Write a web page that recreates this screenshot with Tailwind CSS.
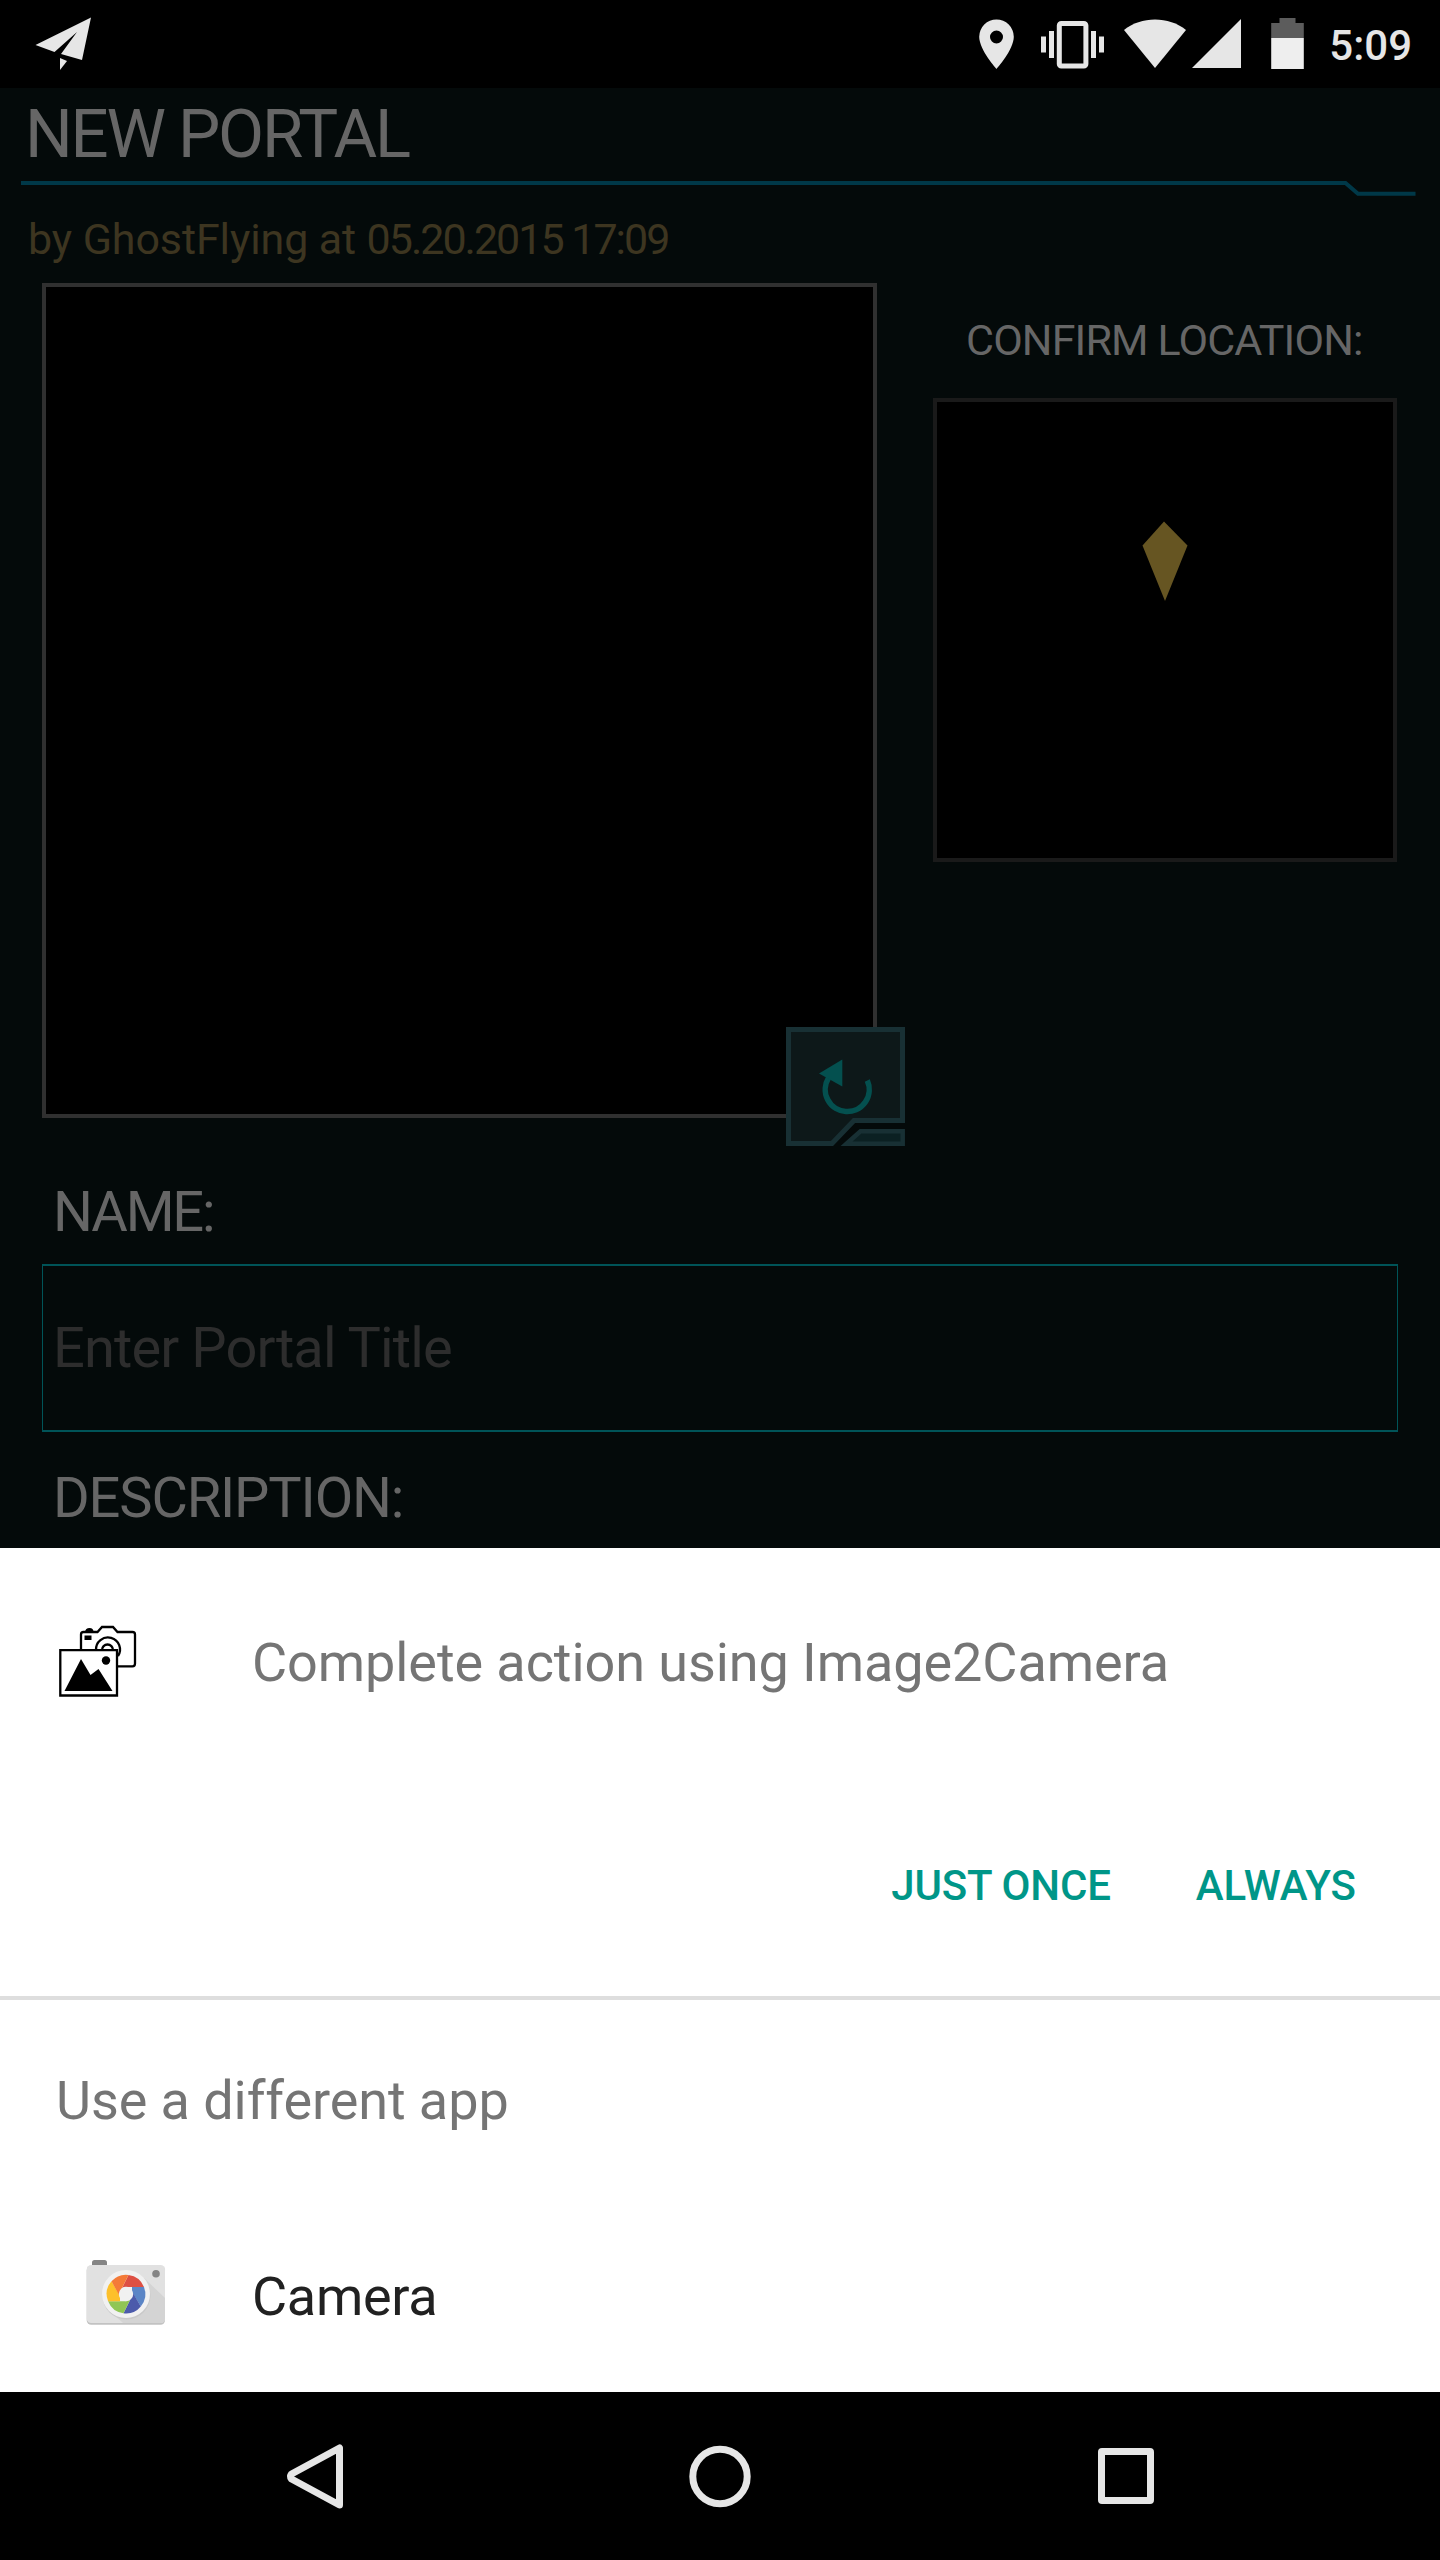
<!DOCTYPE html>
<html lang="en">
<head>
<meta charset="utf-8">
<title>New Portal</title>
<script src="https://cdn.jsdelivr.net/npm/@tailwindcss/browser@4"></script>
</head>
<body class="bg-black">
<div class="flex h-[2560px] w-[1440px] flex-col overflow-hidden bg-[#040a0a] font-['Roboto',sans-serif] whitespace-nowrap">

  <!-- Status bar -->
  <header class="flex h-[88px] shrink-0 justify-between bg-black">
    <svg class="h-[88px] w-[100px]" viewBox="0 0 100 88" fill="#e6e6e6">
      <path d="M91 17.5 35.5 45 54.5 52 77 32 61 54 82 60Z"/>
      <path d="M60 58 67 61 60 70Z"/>
    </svg>
    <div class="flex">
      <svg class="h-[88px] w-[371px]" viewBox="960 0 371 88" fill="#e6e6e6">
        <path fill-rule="evenodd" d="M996.500 19.500a17.300 17.300 0 0 0-17.300 17.300c0 13 17.300 32.200 17.300 32.200s17.300-19.200 17.300-32.200a17.300 17.300 0 0 0-17.300-17.300Zm0 11a6.500 6.500 0 1 1 0 13a6.500 6.500 0 0 1 0-13Z"/>
        <path d="M1041 36.500h5V52.500h-5zM1049 31h5V58h-5zM1091 31h5V58h-5zM1099 36.500h5V52.500h-5z"/>
        <rect x="1059.300" y="23.500" width="26.600" height="42.500" rx="2" fill="none" stroke="#e6e6e6" stroke-width="5"/>
        <path d="M1124 30C1141 16 1169 16 1186 30L1155 68Z"/>
        <path d="M1192 68 1241 19V68Z"/>
        <path fill="#5c5c5c" d="M1279.500 18h16v5h8.300v15h-32.600V23h8.300Z"/>
        <path fill="#eee" d="M1271.200 38h32.600v31h-32.600z"/>
      </svg>
      <span class="mr-[28px] ml-[-2px] h-[88px] text-[42px] leading-[91px] font-medium text-[#e6e6e6]">5:09</span>
    </div>
  </header>

  <!-- Portal submission form -->
  <main class="flex h-[1460px] shrink-0 flex-col overflow-hidden text-[#666]">
    <h1 class="h-[92px] pl-[25px] text-[67px] leading-[92px] tracking-[-2.23px]">NEW PORTAL</h1>
    <svg class="h-[18px] w-[1440px]" viewBox="0 180 1440 18" fill="none" stroke="#003848" stroke-width="4">
      <path d="M21 183H1345.500L1358 193.700H1415.500"/>
    </svg>
    <p class="h-[85px] pl-[28px] text-[43px] leading-[83px] tracking-[-0.1px] text-[#3d3520]">by GhostFlying at <span class="tracking-[-2px]">05.20.2015 17:09</span></p>

    <div class="flex gap-[56px] pl-[42px]">
      <div class="relative size-[835px] border-4 border-[#303030] bg-black">
        <svg class="absolute top-[740px] left-[740px] size-[119px]" viewBox="0 0 119 119">
          <path fill="#040a0a" d="M0 0H119V119H0Z"/>
          <path fill="#0d1819" stroke="#183034" stroke-width="5" d="M2.500 2.500H116.500V93.500H68L46 116.500H2.500Z"/>
          <path fill="#0b2022" stroke="#183034" stroke-width="4.500" d="M60.500 116.700 74.500 104.300H116.700V116.700Z"/>
          <path fill="none" stroke="#04504f" stroke-width="5.500" d="M42.500 51A22 22 0 1 0 81.300 53.500"/>
          <path fill="#04504f" d="M33 46.500 56.300 32.500V59.500Z"/>
        </svg>
      </div>
      <div class="flex w-[464px] flex-col">
        <h2 class="h-[115px] pl-[33px] text-[43px] leading-[115px] tracking-[-0.86px]">CONFIRM LOCATION:</h2>
        <div class="size-[464px] border-4 border-[#1a1a1a] bg-black">
          <svg class="size-[456px]" viewBox="937 402 456 456"><path fill="#665522" d="M1164 521.500 1187.500 545.500 1165 601 1142.500 545.500Z"/></svg>
        </div>
      </div>
    </div>

    <label class="mt-[52px] h-[94px] pl-[53px] text-[56px] leading-[84px] tracking-[-2.17px]">NAME:</label>
    <div class="mx-[42px] h-[168px] shrink-0 border-x border-y-2 border-[#005458] pl-[10px] text-[56px] leading-[164px] tracking-[-0.89px] text-[#2d2d2d]">Enter Portal Title</div>
    <label class="mt-[24px] h-[84px] pl-[53px] text-[56px] leading-[84px] tracking-[-1.15px]">DESCRIPTION:</label>
  </main>

  <!-- App chooser sheet -->
  <section class="flex h-[844px] shrink-0 flex-col bg-white text-[54px] text-[#757575]">
    <div class="flex h-[228px] items-center">
      <svg class="ml-[56px] h-[76px] w-[84px]" viewBox="56 1624 84 76" fill="none" stroke="#000" stroke-width="2.300">
        <path d="M81 1650V1634.500Q81 1632 83.500 1632H97.500L102 1627H113L117.500 1632H132.500Q135 1632 135 1634.500V1663.500Q135 1666.300 132.500 1666.300H118"/>
        <path d="M96 1650A12 12 0 1 1 118 1656M102 1650A5.500 5.500 0 0 1 113 1650"/>
        <path fill="#000" stroke="none" d="M85 1632Q85.500 1628 89.500 1628T93.500 1632ZM84.500 1635.500h7v4.500h-7z"/>
        <path fill="#fff" d="M60.300 1650.200H117V1695.500H60.300Z"/>
        <path fill="#000" stroke="none" d="M64.500 1691 81 1659 90.500 1675 98.500 1669 112.500 1691Z"/>
        <circle cx="106" cy="1660.500" r="4.200" fill="#000" stroke="none"/>
      </svg>
      <span class="ml-[112px] tracking-[-0.08px]">Complete action using Image2Camera</span>
    </div>
    <div class="flex h-[220px] items-center justify-end gap-[85px] pr-[84px] pb-[2px] text-[42px] font-medium text-[#009688]">
      <span class="tracking-[-0.2px]">JUST ONCE</span>
      <span>ALWAYS</span>
    </div>
    <div class="h-1 bg-[#dedede]"></div>
    <div class="flex h-[200px] items-center pl-[56px] tracking-[-0.08px]">Use a different app</div>
    <div class="flex h-[192px] items-center text-[#212121]">
      <svg class="mb-2 ml-[84px] h-[70px] w-[84px]" viewBox="84 2257 84 70">
        <path fill="#858585" d="M92 2266V2262.500Q92 2260 94.500 2260H104.500Q107 2260 107 2262.500V2266Z"/>
        <rect x="86.700" y="2266" width="78.300" height="58.800" rx="4.500" fill="#c2c2c2"/>
        <rect x="86.700" y="2265" width="78.300" height="58" rx="4.500" fill="#e1e1e1"/>
        <path fill="#d4d4d4" d="M144 2278 165 2298V2318.500Q165 2323 160.500 2323H123L110 2311Z"/>
        <circle cx="156" cy="2273.700" r="3.800" fill="#858585"/>
        <circle cx="126.500" cy="2295.500" r="24" fill="#c9c9c9"/>
        <circle cx="126" cy="2294" r="24" fill="#f1f1f1"/>
        <g transform="translate(126 2294)">
          <path fill="#dd4f43" d="M2.500-19.100A19.300 19.300 0 0 1 18-7H0L-4-6Z"/>
          <path fill="#5b85c6" d="M18-7A19.300 19.300 0 0 1 14.800 12.400L6 -2V-7Z"/>
          <path fill="#4c5bab" d="M14.800 12.400A19.300 19.300 0 0 1-2.500 19.200L6 2 7-1Z"/>
          <path fill="#90c654" d="M-2.500 19.200A19.300 19.300 0 0 1-17.900 7.200H0L4 6Z"/>
          <path fill="#fdc02b" d="M-17.900 7.200A19.300 19.300 0 0 1-14.500-12.700L-6 2V7.200Z"/>
          <path fill="#f47a38" d="M-14.500-12.700A19.300 19.300 0 0 1 2.500-19.100L-6-2-7 1Z"/>
          <circle r="7.200" fill="#f1f1f1"/>
        </g>
      </svg>
      <span class="ml-[84px] tracking-[-0.3px]">Camera</span>
    </div>
  </section>

  <!-- Navigation bar -->
  <nav class="flex h-[168px] shrink-0 bg-black">
    <svg class="h-[168px] w-[1440px]" viewBox="0 2392 1440 168" fill="none" stroke="#e6e6e6" stroke-width="7" stroke-linejoin="round">
      <path d="M339.500 2448V2505L291.500 2479Q289.500 2476.500 291.500 2474Z"/>
      <circle cx="720" cy="2476.500" r="27.200"/>
      <rect x="1101.500" y="2451.500" width="49" height="49" rx=".5"/>
    </svg>
  </nav>
</div>
</body>
</html>
